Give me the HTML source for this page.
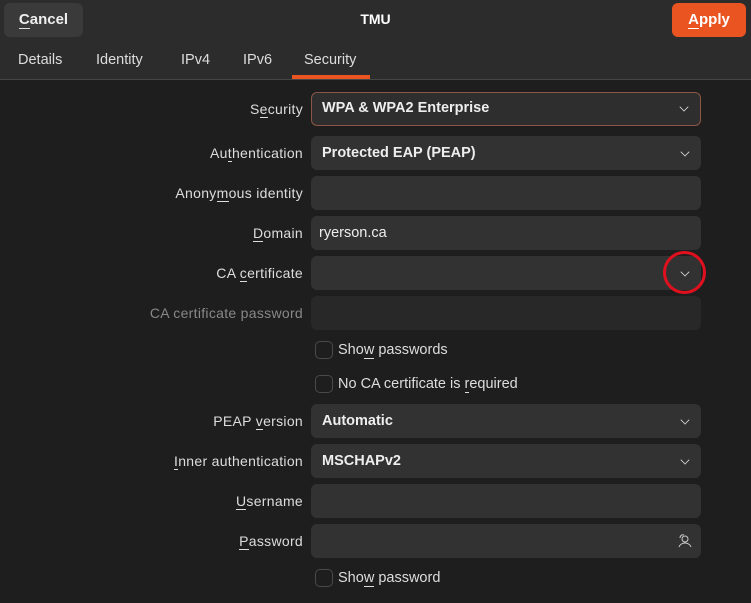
<!DOCTYPE html>
<html><head><meta charset="utf-8"><style>
*{margin:0;padding:0;box-sizing:border-box}
body{width:751px;height:603px;background:#1e1e1e;font-family:"Liberation Sans",sans-serif;font-size:14px;color:#ddd;position:relative;overflow:hidden}
.hdr{position:absolute;left:0;top:0;width:751px;height:80px;background:#2c2c2c;border-bottom:1px solid #464646}
.btn{position:absolute;top:3px;height:34px;border-radius:6px;font-size:15px;font-weight:bold;line-height:34px;text-align:center}
.title{position:absolute;top:11px;left:0;width:751px;text-align:center;font-weight:bold;color:#fff;font-size:14px}
.tab{position:absolute;top:52px;font-size:14.5px;color:#ddd}
.ul{position:absolute;left:292px;top:75px;width:78px;height:4px;background:#e95420}
.lab{position:absolute;right:448px;font-size:14px;letter-spacing:0.3px;color:#ddd;line-height:34px;white-space:nowrap}
.f{position:absolute;left:311px;width:390px;height:34px;background:#323232;border-radius:6px;line-height:34px;padding-left:11px;font-size:14.5px;color:#eee}
.b{font-weight:bold}
.chev{position:absolute;right:12px;top:12px;width:8px;height:8px;border-right:1.3px solid #ddd;border-bottom:1.3px solid #ddd;transform:rotate(45deg) scale(.8)}
.cb{position:absolute;left:315px;width:18px;height:18px;border:1.5px solid #4a4a4a;border-radius:5px}
.ct{position:absolute;left:338px;font-size:14.5px;color:#ddd}
u{text-decoration:none;border-bottom:1.5px solid #ddd}
</style></head><body>
<div class="hdr"></div>
<div class="btn" style="left:4px;width:79px;background:#3a3a3a;color:#eee"><u>C</u>ancel</div>
<div class="title">TMU</div>
<div class="btn" style="left:672px;width:74px;background:#e95420;color:#fff"><u style="border-color:#fff">A</u>pply</div>
<div class="tab" style="left:18px">Details</div>
<div class="tab" style="left:96px">Identity</div>
<div class="tab" style="left:181px">IPv4</div>
<div class="tab" style="left:243px">IPv6</div>
<div class="tab" style="left:304px">Security</div>
<div class="ul"></div>

<div class="lab" style="top:92px">S<u>e</u>curity</div>
<div class="f b" style="top:92px;border:1.5px solid #8a5646;background:#2e2e2e;padding-left:10px;line-height:31px">WPA &amp; WPA2 Enterprise<span class="chev" style="top:10px"></span></div>
<div class="lab" style="top:136px">Au<u>t</u>hentication</div>
<div class="f b" style="top:136px">Protected EAP (PEAP)<span class="chev"></span></div>
<div class="lab" style="top:176px">Anony<u>m</u>ous identity</div>
<div class="f" style="top:176px"></div>
<div class="lab" style="top:216px"><u>D</u>omain</div>
<div class="f" style="top:216px;padding-left:8px">ryerson.ca</div>
<div class="lab" style="top:256px">CA <u>c</u>ertificate</div>
<div class="f" style="top:256px"><span class="chev"></span></div>
<div style="position:absolute;left:663px;top:251px;width:43px;height:43px;border:3px solid #e0101e;border-radius:50%"></div>
<div class="lab" style="top:296px;color:#888">CA certificate password</div>
<div class="f" style="top:296px;background:#282828"></div>
<div class="cb" style="top:341px"></div><div class="ct" style="top:342px">Sho<u>w</u> passwords</div>
<div class="cb" style="top:375px"></div><div class="ct" style="top:376px">No CA certificate is <u>r</u>equired</div>
<div class="lab" style="top:404px">PEAP <u>v</u>ersion</div>
<div class="f b" style="top:404px">Automatic<span class="chev"></span></div>
<div class="lab" style="top:444px"><u>I</u>nner authentication</div>
<div class="f b" style="top:444px">MSCHAPv2<span class="chev"></span></div>
<div class="lab" style="top:484px"><u>U</u>sername</div>
<div class="f" style="top:484px"></div>
<div class="lab" style="top:524px"><u>P</u>assword</div>
<div class="f" style="top:524px"><svg style="position:absolute;right:9px;top:9px" width="16" height="16" viewBox="0 0 16 16" fill="none" stroke="#ccc" stroke-width="1"><circle cx="9" cy="6" r="3"/><path d="M3 14c1-3 4-4 6-4s5 1 6 4"/><path d="M4 5a3 3 0 0 1 4-3"/></svg></div>
<div class="cb" style="top:569px"></div><div class="ct" style="top:570px">Sho<u>w</u> password</div>
</body></html>
